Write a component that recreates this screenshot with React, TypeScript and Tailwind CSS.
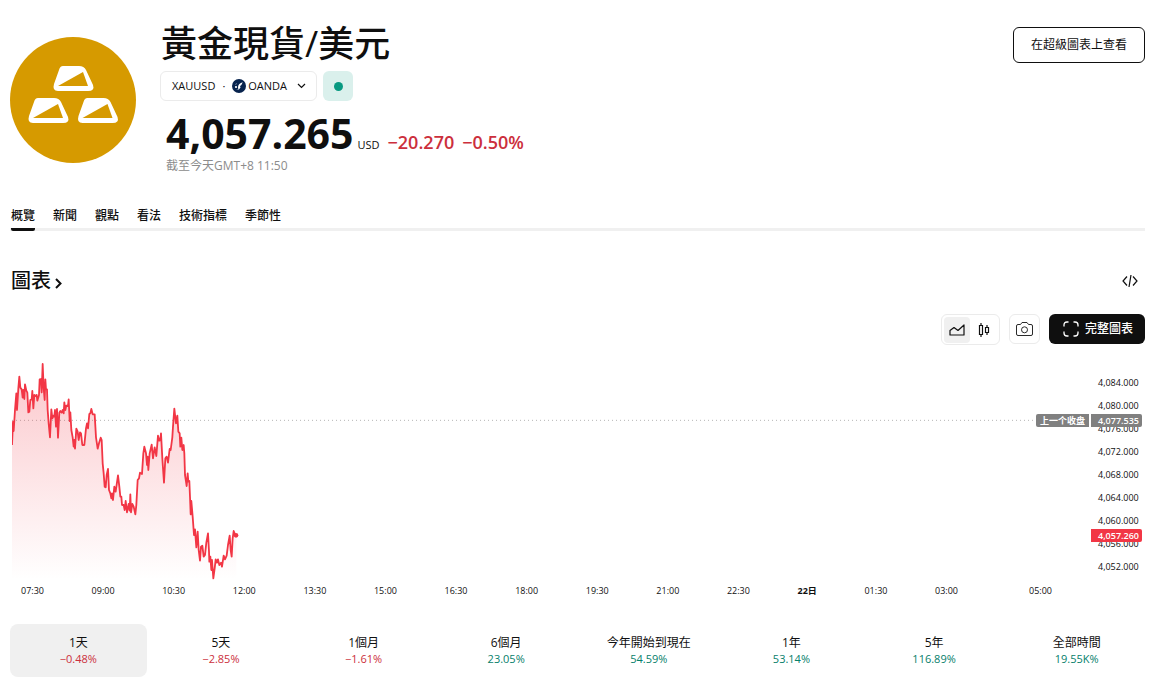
import { useState } from "react";
import clsx from "clsx";

const FONT = "font-['Open_Sans','Noto_Sans_CJK_TC',sans-serif]";

const tabs = ["概覽", "新聞", "觀點", "看法", "技術指標", "季節性"];

const ranges = [
  { label: "1天", change: "−0.48%" },
  { label: "5天", change: "−2.85%" },
  { label: "1個月", change: "−1.61%" },
  { label: "6個月", change: "23.05%" },
  { label: "今年開始到現在", change: "54.59%" },
  { label: "1年", change: "53.14%" },
  { label: "5年", change: "116.89%" },
  { label: "全部時間", change: "19.55K%" },
];

const prices = [
  "4,084.000",
  "4,080.000",
  "4,076.000",
  "4,072.000",
  "4,068.000",
  "4,064.000",
  "4,060.000",
  "4,056.000",
  "4,052.000",
];

const times = [
  "07:30",
  "09:00",
  "10:30",
  "12:00",
  "13:30",
  "15:00",
  "16:30",
  "18:00",
  "19:30",
  "21:00",
  "22:30",
  "22日",
  "01:30",
  "03:00",
];

const series =
  "36,285 39,215 41,243 45,180 49,130 51,180 55,115 58,80 61,113 65,118 68,143 70,120 73,147 75,103 79,122 82,128 85,187 88,185 91,150 95,148 97,123 100,175 103,135 107,138 110,135 112,152 117,135 119,88 123,87 125,127 128,42 131,115 134,150 136,88 138,118 141,118 143,180 146,220 150,262 154,178 157,205 160,197 163,200 165,180 168,230 171,177 174,263 178,188 181,183 185,188 188,180 191,190 193,157 196,180 199,167 204,168 206,148 209,213 211,187 214,240 218,262 221,290 223,270 225,296 229,236 233,245 236,270 240,247 243,250 247,285 253,285 258,235 261,220 264,235 268,192 271,190 274,177 278,193 284,193 288,262 293,296 297,280 302,263 305,270 308,340 311,370 314,410 317,412 320,375 324,357 327,420 331,430 334,445 336,430 339,450 343,410 347,425 354,376 358,410 361,440 364,440 366,465 371,465 374,480 377,453 381,487 386,462 389,482 391,433 393,487 397,462 401,470 406,493 409,465 413,390 417,385 420,368 426,372 430,310 433,290 438,310 441,345 443,320 445,360 449,310 455,284 459,325 464,292 469,318 474,257 478,272 481,270 483,250 487,325 492,398 496,325 500,320 504,338 509,297 512,300 517,262 519,230 523,176 528,220 532,197 535,245 539,250 541,290 544,263 547,300 551,285 553,310 555,375 558,395 560,408 563,370 565,395 568,393 570,440 572,493 574,453 578,500 582,555 585,538 589,592 593,545 596,600 600,632 603,590 607,587 611,620 615,615 619,578 624,550 627,605 628,635 631,620 634,660 636,630 640,685 644,655 647,628 651,638 654,628 658,645 663,638 666,650 671,617 675,628 680,617 684,585 689,557 692,600 695,620 698,565 701,543 705,553 709,556";

function GoldLogo() {
  const bar =
    "M10 1 H26 Q31 1 33 5 L40 20 Q42 26 35 26 H5 Q-1 26 1 19 L6 5 Q7 1 10 1 Z";
  return (
    <svg viewBox="0 0 126 126" className="size-[126px] shrink-0" aria-hidden="true">
      <circle cx="63" cy="63" r="63" fill="#d69a00" />
      {["translate(43 28)", "translate(18 60)", "translate(67.500 60)"].map((t) => (
        <g key={t} transform={t}>
          <path d={bar} fill="#fff" />
          <path d="M5 21 L30 7 L35 21 Z" fill="#d69a00" />
        </g>
      ))}
    </svg>
  );
}

function OandaLogo() {
  return (
    <svg viewBox="0 0 14 14" className="size-3.5" aria-hidden="true">
      <circle cx="7" cy="7" r="7" fill="#07234d" />
      <path d="M6 8.500 C6 5.500 8 4 10.800 3.200 C9.800 4.500 10 6 8 7 L8.500 8.500 L6.500 11 L6 8.500 Z" fill="#fff" />
      <circle cx="4" cy="8" r="1.100" fill="#fff" />
      <path d="M3.200 5.500 L5 4.500 M5 11 L5.500 10" stroke="#7f90ab" strokeWidth="0.800" />
    </svg>
  );
}

function Header() {
  return (
    <header className="flex items-start">
      <div className="pt-[17px]">
        <GoldLogo />
      </div>
      <div className="ml-6 flex-1">
        <h1 className="pl-px text-[36px] leading-[48px] font-medium">黃金現貨/美元</h1>
        <div className="mt-[3px] flex gap-1.5">
          <button
            type="button"
            className="flex h-[30px] w-[157px] items-center rounded-md border border-[#ebebeb] pl-[11px] text-[11px]"
          >
            XAUUSD
            <span className="mx-[7px]">·</span>
            <OandaLogo />
            <span className="ml-0.5">OANDA</span>
            <svg viewBox="0 0 9 6" className="ml-2.5 h-1.5 w-[9px]" fill="none" stroke="#0f0f0f" strokeWidth="1.200" aria-hidden="true">
              <path d="M1 1 L4.500 4.500 L8 1" />
            </svg>
          </button>
          <button
            type="button"
            aria-label="市場開放"
            className="flex size-[30px] items-center justify-center rounded-md bg-[#daf0ec]"
          >
            <span className="size-[9px] rounded-full bg-[#089981]" />
          </button>
        </div>
        <div className="mt-2.5 flex h-[44px] items-baseline pl-1.5 leading-[44px]">
          <span className="text-[41px] font-bold">4,057.265</span>
          <span className="ml-1 text-[11px]">USD</span>
          <span className="ml-2 text-[18px] font-semibold text-[#cc2f3c]">−20.270</span>
          <span className="ml-2 text-[18px] font-semibold text-[#cc2f3c]">−0.50%</span>
        </div>
        <p className="mt-[3px] pl-1.5 text-[12px] leading-4 text-[#8c8c8c]">截至今天GMT+8 11:50</p>
      </div>
      <button
        type="button"
        className="mt-[7px] h-9 rounded-md border border-[#0f0f0f] px-[17px] text-[12px]"
      >
        在超級圖表上查看
      </button>
    </header>
  );
}

function Toolbar() {
  return (
    <div className="flex justify-end">
      <div className="flex h-[31px] w-[59px] items-center rounded-md border border-[#ebebeb] pl-0.5">
        <button
          type="button"
          aria-label="面積圖"
          className="flex h-[26px] w-[26px] items-center justify-center rounded bg-[#f0f0f0]"
        >
          <svg viewBox="0 0 16 12" className="h-3 w-4" fill="none" stroke="#0f0f0f" strokeWidth="1.200" strokeLinejoin="round">
            <path d="M1 11 V6.500 L5 3.500 L9 6.500 L15 1 V11 Z" />
          </svg>
        </button>
        <button type="button" aria-label="K線圖" className="flex h-[26px] w-[30px] items-center justify-center">
          <svg viewBox="0 0 12 16" className="h-4 w-3" fill="none" stroke="#0f0f0f" strokeWidth="1.200">
            <path d="M1.500 3.500 H4.500 V12.500 H1.500 Z M3 1 V3.500 M3 12.500 V15 M7.500 5.500 H10.500 V10.500 H7.500 Z M9 3 V5.500 M9 10.500 V13" />
          </svg>
        </button>
      </div>
      <button
        type="button"
        aria-label="快照"
        className="ml-[9px] flex h-[30px] w-[31px] items-center justify-center rounded-md border border-[#ebebeb]"
      >
        <svg viewBox="0 0 17 14" className="h-3.5 w-[17px]" fill="none" stroke="#2a2a2a">
          <path d="M2 2.500 H4.500 L6 0.500 H11 L12.500 2.500 H15 Q16.500 2.500 16.500 4 V12 Q16.500 13.500 15 13.500 H2 Q0.500 13.500 0.500 12 V4 Q0.500 2.500 2 2.500 Z" />
          <circle cx="8.500" cy="7.800" r="3" />
        </svg>
      </button>
      <button
        type="button"
        className="ml-[9px] flex h-[30px] w-24 items-center justify-center gap-1.5 rounded-md bg-[#0f0f0f] pl-0.5 text-[12px] font-medium text-white"
      >
        <svg viewBox="0 0 16 16" className="size-4" fill="none" stroke="currentColor" strokeWidth="1.300" aria-hidden="true">
          <path d="M5.500 1 H4 Q1 1 1 4 V5.500 M10.500 1 H12 Q15 1 15 4 V5.500 M1 10.500 V12 Q1 15 4 15 H5.500 M15 10.500 V12 Q15 15 12 15 H10.500" />
        </svg>
        完整圖表
      </button>
    </div>
  );
}

function PriceChart() {
  return (
    <div className="relative pl-0.5">
      <div className="flex h-[230px]">
        <svg
          viewBox="36 0 3234 690"
          preserveAspectRatio="none"
          className="h-[230px] w-0 min-w-0 flex-1"
          role="img"
          aria-label="黃金現貨/美元"
        >
          <defs>
            <linearGradient id="area" gradientUnits="userSpaceOnUse" x1="0" y1="40" x2="0" y2="690">
              <stop offset="0" stopColor="#f23645" stopOpacity="0.28" />
              <stop offset="1" stopColor="#f23645" stopOpacity="0" />
            </linearGradient>
          </defs>
          <line
            x1="36"
            x2="3110"
            y1="211"
            y2="211"
            stroke="#b5b5b5"
            strokeDasharray="1 3"
            vectorEffect="non-scaling-stroke"
          />
          <polygon points={`${series} 709,690 36,690`} fill="url(#area)" />
          <polyline
            points={series}
            fill="none"
            stroke="#f23645"
            strokeWidth="1.800"
            strokeLinejoin="round"
            vectorEffect="non-scaling-stroke"
          />
          <ellipse cx="708" cy="556" rx="7" ry="7" fill="#f23645" />
        </svg>
        <ul className="w-[55px] pt-[21px] pl-2 text-[9px] text-[#0f0f0f]">
          {prices.map((p) => (
            <li key={p} className="h-[23px] leading-[23px]">
              {p}
            </li>
          ))}
        </ul>
      </div>
      {/* price tags over the axis */}
      <div className="absolute top-[64px] right-[3px] flex gap-0.5 text-[9px] leading-[13px] font-semibold text-white">
        <span className="w-[53px] rounded-l-xs bg-[#808080] text-center">上一个收盘</span>
        <span className="w-[51px] rounded-r-xs bg-[#808080] pl-[7px]">4,077.535</span>
      </div>
      <div className="absolute top-[179px] right-[3px] w-[51px] rounded-r-xs bg-[#f23645] pl-[7px] text-[9px] leading-[13px] font-semibold text-white">
        4,057.260
      </div>
      <div className="mt-[5px] flex pr-[93px] pl-[9px] text-[9px] leading-3 text-[#0f0f0f]">
        <div className="flex flex-1 justify-between">
          {times.map((t) => (
            <span key={t} className={clsx(t === "22日" && "font-bold")}>
              {t}
            </span>
          ))}
        </div>
        <span className="ml-[71px]">05:00</span>
      </div>
    </div>
  );
}

export default function App() {
  const [tab, setTab] = useState("概覽");
  const [range, setRange] = useState("1天");

  return (
    <main className={clsx(FONT, "bg-white pt-5 pr-[9px] pb-2 pl-2.5 text-[#0f0f0f]")}>
      <Header />

      <nav className="mt-[34px] flex gap-[18px] border-b-3 border-[#f0f0f0] pl-px">
        {tabs.map((t) => (
          <button
            key={t}
            type="button"
            onClick={() => setTab(t)}
            className={clsx(
              "-mb-[3px] h-[23px] border-b-3 pb-1 text-[12px] leading-4 font-medium",
              tab === t ? "rounded-b-xs border-[#0f0f0f]" : "border-transparent"
            )}
          >
            {t}
          </button>
        ))}
      </nav>

      <section>
        <div className="mt-9 flex items-center justify-between pr-[7px] pl-px">
          <h2 className="text-[20px] leading-7 font-medium">
            <a href="#chart" className="flex items-center gap-1">
              圖表
              <svg viewBox="0 0 7 11" className="mt-1 h-[11px] w-[7px]" fill="none" stroke="#0f0f0f" strokeWidth="2" aria-hidden="true">
                <path d="M1 1 L5.500 5.500 L1 10" />
              </svg>
            </a>
          </h2>
          <button type="button" aria-label="嵌入程式碼">
            <svg viewBox="0 0 16 12" className="h-3 w-4" fill="none" stroke="#0f0f0f" strokeWidth="1.200">
              <path d="M5 1.500 L1 6 L5 10.500 M11 1.500 L15 6 L11 10.500 M9 0 L7 12" />
            </svg>
          </button>
        </div>

        <div id="chart" className="mt-[19px]">
          <Toolbar />
          <div className="mt-[5px]">
            <PriceChart />
          </div>
        </div>

        <div className="mt-[27px] grid grid-cols-8 gap-1.5">
          {ranges.map((r) => (
            <button
              key={r.label}
              type="button"
              onClick={() => setRange(r.label)}
              className={clsx(
                "flex h-[53px] flex-col items-center justify-center rounded-lg text-[12px] leading-4",
                range === r.label && "bg-[#f0f0f0]"
              )}
            >
              <span>{r.label}</span>
              <span
                className={clsx(
                  "text-[11px] leading-4",
                  r.change.startsWith("−") ? "text-[#cc2f3c]" : "text-[#06806b]"
                )}
              >
                {r.change}
              </span>
            </button>
          ))}
        </div>
      </section>
    </main>
  );
}
